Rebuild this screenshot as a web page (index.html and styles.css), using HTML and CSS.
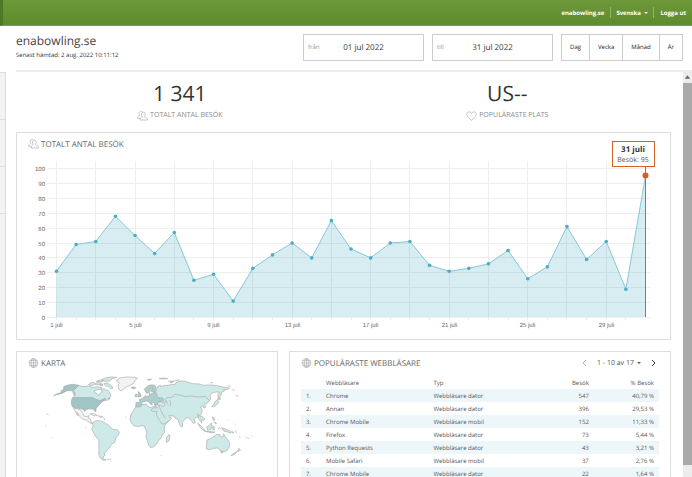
FILE: index.html
```html
<!DOCTYPE html>
<html lang="sv">
<head>
    <meta charset="utf-8">
    <title>enabowling.se</title>
    <link rel="stylesheet" href="styles.css">
</head>
<body>
    <svg class="sprite" aria-hidden="true">
        <symbol id="icon-people" viewBox="0 0 32 30">
            <path d="M11 20c2-2 4-2 4-4-3-3-3-12 3-13 7 0 7 9 4 13 0 2 2 3 5 4 3 1 4 3 4 7H9c0-4 0-6 2-7z"/>
            <path d="M9 22H1c0-4 1-5 5-7 2-1 1-3 0-5-1-5 1-9 5-9 2 0 3 1 4 2"/>
        </symbol>
        <symbol id="icon-heart" viewBox="0 0 32 30">
            <path d="M16 28C8 21 2 17 2 10c0-9 11-10 14-2 3-8 14-7 14 2 0 7-6 11-14 18z"/>
        </symbol>
        <symbol id="icon-globe" viewBox="0 0 30 30">
            <circle cx="15" cy="15" r="13"/>
            <ellipse cx="15" cy="15" rx="7" ry="13"/>
            <path d="M15 2v26M2 15h26M4 8h22M4 22h22"/>
        </symbol>
    </svg>

    <nav class="topbar">
        <a href="#">enabowling.se</a>
        <span class="dropdown">
            <select aria-label="Språk"><option>Svenska</option></select>
        </span>
        <a href="#">Logga ut</a>
    </nav>

    <header class="header">
        <div class="site">
            <h1>enabowling.se</h1>
            <p>Senast hämtad: 2 aug. 2022 10:11:12</p>
        </div>
        <div class="date-field">
            <label for="dateFrom">från</label>
            <input type="text" id="dateFrom" value="01 jul 2022">
        </div>
        <div class="date-field">
            <label for="dateTo">till</label>
            <input type="text" id="dateTo" value="31 jul 2022">
        </div>
        <div class="periods">
            <button type="button">Dag</button>
            <button type="button">Vecka</button>
            <button type="button">Månad</button>
            <button type="button">År</button>
        </div>
    </header>

    <div class="page">
        <aside class="sidebar">
            <div class="item"></div>
            <div class="item"></div>
            <div class="item"></div>
        </aside>

        <main class="content">
            <section class="stats">
                <div class="stat">
                    <strong>1 341</strong>
                    <span><svg class="icon"><use href="#icon-people"/></svg>TOTALT ANTAL BESÖK</span>
                </div>
                <div class="stat">
                    <strong>US--</strong>
                    <span><svg class="icon"><use href="#icon-heart"/></svg>POPULÄRASTE PLATS</span>
                </div>
            </section>

            <section class="panel">
                <h2><svg class="icon"><use href="#icon-people"/></svg>TOTALT ANTAL BESÖK</h2>
                <svg class="chart" id="chart" viewBox="0 0 653 184"></svg>
            </section>

            <div class="columns">
                <section class="panel">
                    <h2><svg class="icon"><use href="#icon-globe"/></svg>KARTA</h2>
                    <svg class="map" viewBox="51 102 783 321">
                        <!-- no visits -->
                        <g class="none">
                            <path d="M350 122l12-8 18-3 26 1 8 3-8 6-3 9-12 6-14 7-12 10-7-4-3-12 4-8z"/>
                            <path d="M221 205l12 1 10 5 6 9 4 9 9 1 6-3-3 8 7 3 2 9 5 4-8-1-9-8-14-5-9-8-7-11-1 1 4 9-5-7z"/>
                            <path d="M270 222l12-1 11 6-9 1zM296 228l13 2-5 4zM312 232l3 9"/>
                        </g>
                        <g class="low">
                            <path d="M237 137l14 3 15-2 12 4 17-1 11 1-2 6-18 3-2 6 8 4 5 6 4-7 6-3-2-9 9-2 4 5 5-1 8 9 3 11-9 6 6-1-4 5-13 2-8 3-6-3-12-4h-60l-5-6-1-12-6-5z"/>
                            <path d="M266 134l10-7 12 3 8-3 9 4-7 4-13-1-9 3zM290 124l12-4 10 2-6 4zM306 119l12-5 17-3 16 1-13 4-8 7-15 1zM312 132l10-3 11 6 7 9-8 2-5-6-10-3zM300 135l8-3 1 6z"/>
                            <path d="M279 248l12-6 14 2 12 6 8 5 8 7 2 5 18 4 6 5-2 9-8 9-3 13-11 7-5 10-7 6-3 6-6 5 1 7-5 4 2 6 7 3-8 1-9-6-5-12 1-14-1-18 1-13-9-7-9-16-4-9 4-8z"/>
                            <path d="M410 197l12-3 20-1 1 6 12 4 6-3 16 2 6 1 8 17 9 14 13-2-4 10-12 13-3 12 2 10-9 11-3 9-7 6-5 10-10 9-10 1-5-8-4-14-4-10 3-12-5-14-2-6-9-1-10 2-13-2-9-11-3-8 4-17 10-14z"/>
                            <path d="M509 284l3 5-4 15-6 4-2-7 2-9z"/>
                            <path d="M474 140l9-4 1 4 10-3 13-1 13-3 7 1 2-5 10-6 13 0 18 5 9 3 22 1 12 4 22-1 18 2 18 4 20 3-7 5-11 0 3 4-9 4-3 12-5 6-4-10 7-8-12-1-12 4-7 8 4 4-3 9-9 10-7 2 3 9-5 3-4-7-7 3 6 9-2 11-6 8-14 5-3 3 4 11-5 3-7-8-5-7-8-3-7 6-7 9 1 11-4 3-7-12-4-12-8-3-3-6-16-2 1 4 7 3-5 8-17 10-6 1-13-20-5-10 3-8-15-1-4-3 7-7 13 0-8-5 3-7-6-8-1-11z"/>
                            <path d="M470 187l12-2 9 2 6 8-4 5-11-3-11-3z"/>
                            <path class="line" d="M491 187l12-1M479 198l5 14 14 24M504 194l-6-15 5-6 17-1 7-9 16 3 14 4 19-2 17 3 25-1 9 8 6 7M511 181l3 9-3 9"/>
                            <path d="M648 184l7-3 4 7-8 8-9 5-5-1 7-7zM655 180l2-7 8 4zM594 222l7 7 8 1 8 8-3 4-7-2 0 9-8-12z"/>
                            <path d="M595 250l8 6 10 10 4 7-7-3-8-8zM622 262l8-5 7-8 1 8-3 13-10 1zM615 274l14 1 18 2-11 2zM640 261l6-1-2 5 2 6-5-1zM667 264l12 4 12 5 4 7-9-3-12-3z"/>
                            <path d="M640 231l5 4 0 8-4-4zM646 246l6 4-3 3zM696 276l8 1-3 3zM708 272l5 8M720 290l4 3"/>
                            <path d="M623 301l14-6 8-6 7-5 11 1 0 6 7 2 3-11 6 10 7 9 6 9-1 10-9 14-12 3-9-7-6-5-13 1-10 4-11-2z"/>
                            <path d="M664 335l8 0-4 6zM719 326l5 4-6 6-3-1zM714 336l-9 9-10 3 9-8z"/>
                            <path d="M443 118l13 0-9 3zM479 116l14-2 12 2-13 1zM506 123l16 2-10 4 11-6 16-3M633 128l9 1M686 137l9 2"/>
                        </g>
                        <g class="mid">
                            <path d="M394 142l10-1 5 3-8 3zM434 148l8-8 10-5 12 0 5 6-2 13 5 9 3 10 14 1 5 6-7 5-9 0-5 10-7 1-3-8-8-1 4 8-5-1-5-8-9-3-9 3-5 3 1 8-10 5-8-2 0-12 12-1-1-8 8-3 6-5 5-5 2 4 8-2 1-7-4-3-4 3z"/>
                            <path d="M416 155l6 5 3 9-10 2 3-6zM408 163l6 1-2 6-6 0z"/>
                            <path class="sea" d="M449 158l7-12 4-2-5 10 11 5-9 2-4 3z"/>
                        </g>
                        <g class="high">
                            <path d="M218 173h61l7 4 7 4 8 1 16-7 1 3-10 7-8 8-5 6-6 7 0 9-4-1-3-6-11-1-10 1-7 7-3-6-10-3-10-1-12-3-4-8 0-13z"/>
                            <path d="M205 135l15-2 17 3-16 15-8 1-13 1-12 7-13 3-14 4 13-6 10-3 1-7 11-3-6-3 2-5z"/>
                            <path d="M221 152l4 5 1 10-4-9M140 221l6 5M137 259h3M154 294h2M256 262l4 2"/>
                        </g>
                        <path class="specks" d="M739 292l6 4M757 288l3 2M748 297l4-2M321 358l5 2 8-3M484 347h3M377 232l3 2M706 252l3 2M685 240h2M699 148l8 4M710 167l8 1M655 268l6-5 4 6"/>
                    </svg>
                </section>

                <section class="panel">
                    <div class="panel-head">
                        <h2><svg class="icon"><use href="#icon-globe"/></svg>POPULÄRASTE WEBBLÄSARE</h2>
                        <div class="pager">
                            <button type="button" aria-label="Föregående" disabled><svg viewBox="0 0 5 8"><path d="M4 1L1 4l3 3"/></svg></button>
                            <span class="dropdown">
                                <select aria-label="Rader"><option>1 - 10 av 17</option></select>
                            </span>
                            <button type="button" aria-label="Nästa"><svg viewBox="0 0 5 8"><path d="M1 1l3 3-3 3"/></svg></button>
                        </div>
                    </div>
                    <table>
                        <thead>
                            <tr><th class="nr"></th><th>Webbläsare</th><th>Typ</th><th class="num">Besök</th><th class="num">% Besök</th></tr>
                        </thead>
                        <tbody>
                            <tr><td>1.</td><td>Chrome</td><td>Webbläsare dator</td><td class="num">547</td><td class="num">40,79 %</td></tr>
                            <tr><td>2.</td><td>Annan</td><td>Webbläsare dator</td><td class="num">396</td><td class="num">29,53 %</td></tr>
                            <tr><td>3.</td><td>Chrome Mobile</td><td>Webbläsare mobil</td><td class="num">152</td><td class="num">11,33 %</td></tr>
                            <tr><td>4.</td><td>Firefox</td><td>Webbläsare dator</td><td class="num">73</td><td class="num">5,44 %</td></tr>
                            <tr><td>5.</td><td>Python Requests</td><td>Webbläsare dator</td><td class="num">43</td><td class="num">3,21 %</td></tr>
                            <tr><td>6.</td><td>Mobile Safari</td><td>Webbläsare mobil</td><td class="num">37</td><td class="num">2,76 %</td></tr>
                            <tr><td>7.</td><td>Chrome Mobile</td><td>Webbläsare dator</td><td class="num">22</td><td class="num">1,64 %</td></tr>
                        </tbody>
                    </table>
                </section>
            </div>
        </main>

        <div class="scrollbar">
            <svg viewBox="0 0 10 11"><path d="M2 7l3-4 3 4z"/></svg>
            <div class="thumb"></div>
        </div>
    </div>

    <script>
        const visits = [31, 49, 51, 68, 55, 43, 57, 25, 29, 11, 33, 42, 50, 40, 65, 46,
            40, 50, 51, 35, 31, 33, 36, 45, 26, 34, 61, 39, 51, 19, 95];
        const left = 39, right = 628, bottom = 162, top100 = 13;

        const px = i => left + i * (right - left) / (visits.length - 1);
        const py = v => bottom - v * (bottom - top100) / 100;

        let out = '';

        // grid and axis labels
        for (let v = 0; v <= 100; v += 10) {
            const y = Math.round(py(v)) + 0.5;
            out += `<path class="grid" d="M30 ${y}H634"/>`;
            out += `<text class="axis end" x="28" y="${y + 2}">${v}</text>`;
        }
        visits.forEach((v, i) => {
            const x = Math.round(px(i)) + 0.5;
            out += `<path class="grid" d="M${x} ${i % 2 ? bottom : 6}V${bottom + 3}"/>`;
            if (i % 4 === 0 && i < 30) {
                out += `<text class="axis" x="${x}" y="172">${i + 1} juli</text>`;
            }
        });

        // area, line and dots
        const points = visits.map((v, i) => `${px(i) + 0.5},${py(v) + 0.5}`).join(' ');
        out += `<polygon class="area" points="${left},${bottom} ${points} ${right},${bottom}"/>`;
        out += `<polyline class="line" points="${points}"/>`;
        visits.slice(0, -1).forEach((v, i) => {
            out += `<circle class="dot" cx="${px(i) + 0.5}" cy="${py(v) + 0.5}" r="1.8"/>`;
        });

        // selected day
        out += `<rect class="marker" x="628" y="8" width="1" height="${bottom - 8}"/>
            <circle class="marker-dot" cx="628.5" cy="20.5" r="3"/>
            <rect class="tip" x="595.5" y="-13.5" width="42" height="25"/>
            <text class="tip-title" x="616" y="-3">31 juli</text>
            <text class="tip-text" x="616" y="7">Besök: 95</text>`;

        document.getElementById('chart').innerHTML = out;
    </script>
</body>
</html>
```

FILE: styles.css
```css
* {
    box-sizing: border-box;
}
body {
    margin: 0;
    height: 100vh;
    display: flex;
    flex-direction: column;
    overflow: hidden;
    font-family: "Open Sans", sans-serif;
    font-size: 6px;
    text-rendering: geometricPrecision;
    color: #555;
    background: #fff;
}
h1, h2, p {
    margin: 0;
    font-weight: normal;
}
button, input, select {
    font: inherit;
    color: inherit;
    text-rendering: inherit;
    border: none;
    background: none;
    padding: 0;
    margin: 0;
}
.sprite {
    display: none;
}
.icon {
    width: 11px;
    height: 10px;
    margin-right: 2px;
    fill: none;
    stroke: #aaa;
    stroke-width: 2;
}

/* top bar */
.topbar {
    flex: none;
    height: 26px;
    display: flex;
    align-items: center;
    justify-content: flex-end;
    padding-right: 6px;
    border-left: 3px solid #4e7728;
    border-bottom: 1px solid #7ba544;
    background: linear-gradient(#6d993b, #5e8b2c);
    color: #fff;
    font-weight: bold;
}
.topbar a {
    color: #fff;
    text-decoration: none;
}
.topbar .dropdown {
    margin: 0 6px;
    padding: 0 5px;
    height: 11px;
    border-left: 1px solid #95b56f;
    border-right: 1px solid #95b56f;
}
.dropdown {
    display: flex;
    align-items: center;
}
.dropdown select {
    appearance: none;
}
.dropdown::after {
    content: "";
    margin-left: 3px;
    border: 2px solid transparent;
    border-top-color: currentColor;
    border-bottom: none;
}

/* header */
.header {
    flex: none;
    display: flex;
    align-items: center;
    height: 46px;
    margin-left: 16px;
    padding: 0 9px 2px 0;
    border-bottom: 2px solid #eee;
}
.site {
    flex: 1;
}
.site h1 {
    font-size: 12px;
    line-height: 16px;
    color: #444;
}
.site p {
    line-height: 12px;
    color: #333;
}
.date-field {
    width: 121px;
    height: 27px;
    margin-right: 8px;
    padding: 0 4px;
    display: grid;
    grid-template-columns: 20px 1fr 20px;
    align-items: center;
    border: 1px solid #ccc;
}
.date-field label {
    color: #999;
}
.date-field input {
    width: 100%;
    font-size: 8px;
    color: #333;
    text-align: center;
}
.periods {
    display: flex;
    height: 27px;
    border: 1px solid #ccc;
}
.periods button {
    padding: 0 8px;
    color: #222;
}
.periods button + button {
    border-left: 1px solid #ccc;
}

/* page */
.page {
    flex: 1;
    min-height: 0;
    display: flex;
}
.sidebar {
    width: 6px;
    border: 1px solid #ddd;
    border-width: 1px 1px 0 0;
    background: #f3f3f3;
}
.sidebar .item {
    height: 47px;
    border-bottom: 1px solid #ddd;
}
.content {
    flex: 1;
    min-width: 0;
    padding: 0 12px 0 10px;
    overflow: hidden;
}
.scrollbar {
    width: 9px;
    display: flex;
    flex-direction: column;
    padding-bottom: 12px;
    background: #ececec;
}
.scrollbar svg {
    height: 11px;
    fill: #666;
}
.thumb {
    flex: 1;
    background: #a9a9a9;
}

.stats {
    height: 60px;
    display: grid;
    grid-template-columns: 1fr 1fr;
    text-align: center;
}
.stat strong {
    display: block;
    padding-top: 6px;
    font-size: 21px;
    font-weight: normal;
    line-height: 32px;
    color: #333;
}
.stat span {
    display: flex;
    align-items: center;
    justify-content: center;
    font-size: 7px;
    line-height: 12px;
    color: #888;
}

.panel {
    border: 1px solid #ddd;
    background: #fff;
}
.panel h2 {
    display: flex;
    align-items: center;
    height: 22px;
    padding-left: 11px;
    font-size: 8px;
    color: #666;
}
.columns {
    display: grid;
    grid-template-columns: 40% 1fr;
    gap: 11px;
    margin-top: 11px;
}

/* chart */
.chart {
    display: block;
    width: 100%;
    overflow: visible;
}
.chart .grid {
    stroke: #eee;
}
.chart text {
    text-anchor: middle;
}
.chart .axis {
    font-family: "Liberation Sans", Arial, sans-serif;
    font-size: 6px;
    fill: #666;
}
.chart .end {
    text-anchor: end;
}
.chart .area {
    fill: #4bacc0;
    fill-opacity: 0.22;
}
.chart .line {
    fill: none;
    stroke: #86c8d7;
}
.chart .dot {
    fill: #4bacc6;
}
.chart .marker {
    fill: #d2622a;
}
.chart .marker-dot {
    fill: #d2622a;
}
.chart .tip {
    fill: #fff;
    stroke: #d2622a;
}
.chart .tip-title {
    font-size: 8px;
    font-weight: bold;
    fill: #333;
}
.chart .tip-text {
    font-size: 7px;
    fill: #555;
}

/* map */
.map {
    display: block;
    width: 100%;
    stroke: #aaa;
    stroke-width: 2;
    stroke-linejoin: round;
}
.map .none {
    fill: #f2f2f2;
}
.map .low {
    fill: #ceeae8;
}
.map .mid {
    fill: #abcfcd;
}
.map .high {
    fill: #9fc5c4;
}
.map .sea {
    fill: #fff;
}
.map .line, .map .specks {
    fill: none;
}

/* browsers */
.panel-head {
    display: flex;
    justify-content: space-between;
}
.pager {
    display: flex;
    align-items: center;
    gap: 10px;
    padding-right: 14px;
    font-size: 7px;
}
.pager button {
    display: flex;
    color: #333;
}
.pager button:disabled {
    color: #bbb;
}
.pager svg {
    width: 5px;
    height: 8px;
    fill: none;
    stroke: currentColor;
}
table {
    width: calc(100% - 22px);
    margin: 2px 11px 0;
    border-collapse: collapse;
    table-layout: fixed;
}
th, td {
    height: 13px;
    padding: 0 5px;
    font-weight: normal;
    text-align: left;
    white-space: nowrap;
}
th:nth-child(1) {
    width: 20px;
}
th:nth-child(2) {
    width: 30%;
}
th:nth-child(3) {
    width: 28%;
}
th.num, td.num {
    text-align: right;
}
tbody tr:nth-child(odd) {
    background: #edf7fa;
}
```
